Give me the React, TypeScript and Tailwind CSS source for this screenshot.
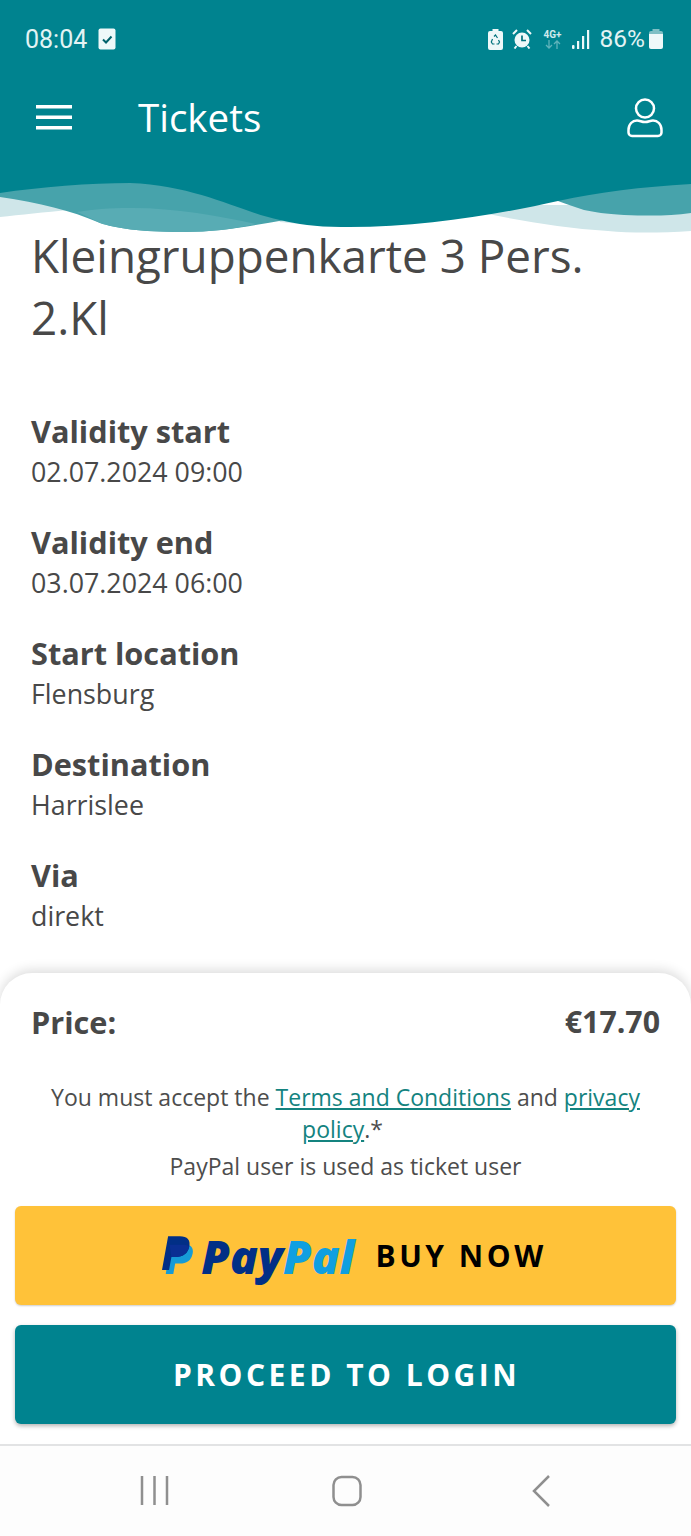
const openSans = "font-['Open_Sans',sans-serif]";

const fields = [
  { label: "Validity start", value: "02.07.2024 09:00" },
  { label: "Validity end", value: "03.07.2024 06:00" },
  { label: "Start location", value: "Flensburg" },
  { label: "Destination", value: "Harrislee" },
  { label: "Via", value: "direkt" },
];

function StatusBar() {
  return (
    <div className="flex h-[78px] items-center justify-between pl-[25px] pr-[28px] text-[#e3f3f4]">
      <div className="flex items-center gap-[11px]">
        <span className="font-['Roboto',sans-serif] text-[25px] leading-none">08:04</span>
        <svg width="18" height="22" viewBox="0 0 18 22">
          <rect x="0.5" y="0.5" width="17" height="21" rx="2" fill="#eef8f9" />
          <path d="M5 11.500l3 3 5.500-6" fill="none" stroke="#00616b" strokeWidth="2" />
        </svg>
      </div>
      <div className="flex items-center">
        {/* recycle battery */}
        <svg width="15" height="21" viewBox="0 0 15 21" className="mr-[9px]">
          <path d="M4.500 0h6v2h2.500a2 2 0 0 1 2 2v15a2 2 0 0 1-2 2H2a2 2 0 0 1-2-2V4a2 2 0 0 1 2-2h2.500z" fill="#eef8f9" />
          <path d="M6 7.500l1.500-1.500 2 3M4.500 10l-1.200 3 1.200 2h2M8.500 15h2l1-2-1-2" fill="none" stroke="#00717c" strokeWidth="1.200" />
        </svg>
        {/* alarm */}
        <svg width="20" height="20" viewBox="0 0 20 20" className="mr-[11px]">
          <circle cx="10" cy="11" r="7.500" fill="#eef8f9" />
          <path d="M1 5l4-4M19 5l-4-4M4.500 17l-2 2.500M15.500 17l2 2.500" stroke="#eef8f9" strokeWidth="2" fill="none" />
          <path d="M10 6.500V11.500H14" stroke="#00717c" strokeWidth="1.700" fill="none" />
        </svg>
        {/* 4G+ */}
        <div className="mr-[9px] flex w-[20px] flex-col items-center">
          <span className="font-['Roboto',sans-serif] text-[10px] font-bold leading-[11px] text-[#cfe9eb]">4G+</span>
          <svg width="18" height="9" viewBox="0 0 18 9">
            <path d="M5 0v8M2 5l3 3 3-3" stroke="#5fb3bb" strokeWidth="1.300" fill="none" />
            <path d="M13 9V1M10 4l3-3 3 3" stroke="#5fb3bb" strokeWidth="1.300" fill="none" />
          </svg>
        </div>
        {/* signal */}
        <svg width="18" height="19" viewBox="0 0 18 19" className="mr-[10px]">
          <rect x="0" y="15" width="2.500" height="4" rx="1" fill="#eef8f9" />
          <rect x="5" y="11" width="2.200" height="8" fill="#eef8f9" />
          <rect x="10" y="6" width="2.200" height="13" fill="#eef8f9" />
          <rect x="15" y="0" width="2.200" height="19" fill="#eef8f9" />
        </svg>
        <span className="font-['Roboto',sans-serif] text-[24.500px] leading-none">86%</span>
        <svg width="14" height="20" viewBox="0 0 14 20" className="ml-[4px]">
          <path d="M3.500 0h7v2h1.500a2 2 0 0 1 2 2v2H0V4a2 2 0 0 1 2-2h1.500z" fill="#7fbfc5" />
          <path d="M0 5h14v13a2 2 0 0 1-2 2H2a2 2 0 0 1-2-2z" fill="#eef8f9" />
        </svg>
      </div>
    </div>
  );
}

function TitleBar() {
  return (
    <div className="flex h-[80px] items-center pl-[36px] pr-[28px]">
      <svg width="36" height="26" viewBox="0 0 36 26" className="mr-[66px]">
        <rect x="0" y="0" width="36" height="3.500" fill="#fff" />
        <rect x="0" y="10.500" width="36" height="3.500" fill="#fff" />
        <rect x="0" y="21" width="36" height="3.500" fill="#fff" />
      </svg>
      <h1 className="-mt-[2px] flex-1 text-[38.500px] leading-none text-white">Tickets</h1>
      <svg width="36" height="40" viewBox="0 0 36 40" fill="none" stroke="#fff" strokeWidth="2.500">
        <circle cx="18" cy="10.500" r="9" />
        <path d="M1.500 32c0-6 4-9.500 8.500-9.500 3 0 4.500 1.500 8 1.500s5-1.500 8-1.500c4.500 0 8.500 3.500 8.500 9.500v2.500a3.500 3.500 0 0 1-3.500 3.500H5a3.500 3.500 0 0 1-3.500-3.500z" />
      </svg>
    </div>
  );
}

function Wave() {
  return (
    <svg viewBox="0 158 691 76" width="691" height="76" className="block">
      <rect x="0" y="158" width="691" height="76" fill="#ffffff" />
      {/* palest layer, left, notch and right */}
      <path d="M0 190H70V210C45 212 20 215 0 217Z" fill="#cfe6e9" />
      <path d="M275 215H310V224C300 224 290 223 280 222Z" fill="#cfe6e9" />
      <path d="M484 205H691V231C660 233 630 233 608 231C565 228 525 222 484 213Z" fill="#cfe6e9" />
      {/* mid layers sit under the dark wave */}
      <path d="M0 170H285V220C250 226 220 232 183 232C140 232 115 228 100 223C70 210 40 203 0 197Z" fill="#47a3ab" />
      <path d="M77 212C100 208 120 208 133 208C175 208 220 216 256 224C235 229 210 232 183 232C140 232 115 228 100 223C92 219 85 215 77 212Z" fill="#58acb4" />
      <path d="M550 170H691V213C670 216 650 216 624 215C605 214 595 212 584 210C575 207 566 204 558 201Z" fill="#47a3ab" />
      {/* dark header colour */}
      <path d="M0 158H691V184C640 187 600 192 558 201C500 214 420 228 341 227C315 227 297 224 280 220C240 212 200 186 130 183C90 183 40 187 0 193Z" fill="#00838f" />
    </svg>
  );
}

function PayPalMark() {
  return (
    <svg width="32" height="40" viewBox="0 0 34 42">
      <path d="M9 8h13c8 0 12 4 10.500 10.500C31 26 26 29 19 29h-5l-2 11H4z" fill="#169bd7" />
      <path d="M6.500 0H19c8 0 11.500 4 10 11C27.500 18.500 22 22 15 22h-5L7.500 36H0z" fill="#012f86" />
      <path d="M8 9h14c3 0 5.500.7 7 2-1.500 7.500-7 11-14 11h-5z" fill="#0a2f93" />
    </svg>
  );
}

function NavBar() {
  return (
    <div className="flex h-[92px] items-start border-t-2 border-[#e2e3e4] bg-[#fdfdfd] pt-[28px]">
      <div className="flex w-full items-center">
        <svg width="30" height="32" viewBox="0 0 30 32" className="ml-[140px]" stroke="#8f8f8f" strokeWidth="2.500">
          <path d="M2 1v29M14.500 1v29M27 1v29" />
        </svg>
        <svg width="30" height="32" viewBox="0 0 30 32" className="ml-[162px]" fill="none" stroke="#8f8f8f" strokeWidth="2.500">
          <rect x="1.500" y="2" width="27" height="28" rx="8" />
        </svg>
        <svg width="20" height="34" viewBox="0 0 20 34" className="ml-[169px]" fill="none" stroke="#8f8f8f" strokeWidth="2.500">
          <path d="M18 2L3 17l15 15" />
        </svg>
      </div>
    </div>
  );
}

export default function App() {
  return (
    <div className={`flex h-[1536px] w-[691px] flex-col overflow-hidden bg-white ${openSans}`}>
      <header className="bg-[#00838f]">
        <StatusBar />
        <TitleBar />
      </header>
      <Wave />

      <main className="flex-1 pl-[31px] pr-[31px] text-[#484848]">
        <h2 className="-mt-[10px] text-[45.800px] leading-[62px]">Kleingruppenkarte 3 Pers. 2.Kl</h2>
        <div className="mt-[64px] flex flex-col gap-[31px]">
          {fields.map((f) => (
            <div key={f.label}>
              <div className="text-[30.700px] font-bold leading-[38px]">{f.label}</div>
              <div className="mt-[2px] text-[26.800px] leading-[40px]">{f.value}</div>
            </div>
          ))}
        </div>
      </main>

      <section className="h-[471px] rounded-t-[32px] bg-white px-[15px] shadow-[0_-3px_12px_rgba(0,0,0,0.14)]">
        <div className="flex items-center justify-between px-[16px] pt-[27px] font-bold leading-[44px] text-[#484848]">
          <span className="text-[30.700px]">Price:</span>
          <span className="text-[30.300px]">€17.70</span>
        </div>
        <div className="mt-[37px] px-[16px] text-center text-[23px] text-[#4d4d4d]">
          <p className="leading-[32px]">
            You must accept the{" "}
            <a className="text-[#14837f] underline">Terms and Conditions</a> and{" "}
            <a className="text-[#14837f] underline">privacy policy</a>.*{"\u00a0"}
          </p>
          <p className="mt-[5px] leading-[32px]">PayPal user is used as ticket user</p>
        </div>
        <button className="mt-[24px] flex h-[99px] w-full items-center justify-center rounded-[6px] bg-[#ffc239] pl-[18px] shadow-[0_1px_2px_rgba(0,0,0,0.2)]">
          <PayPalMark />
          <span className="ml-[7px] text-[46px] font-extrabold italic leading-none">
            <span className="text-[#012f86]">Pay</span>
            <span className="text-[#109fe0]">Pal</span>
          </span>
          <span className="ml-[21px] text-[30px] font-bold leading-none tracking-[3.500px] text-black">BUY NOW</span>
        </button>
        <button className="mt-[20px] flex h-[99px] w-full items-center justify-center rounded-[6px] bg-[#00838f] pl-[2px] text-[30px] font-bold tracking-[3.500px] text-white shadow-[0_2px_4px_rgba(0,0,0,0.3)]">
          PROCEED TO LOGIN
        </button>
      </section>

      <NavBar />
    </div>
  );
}
